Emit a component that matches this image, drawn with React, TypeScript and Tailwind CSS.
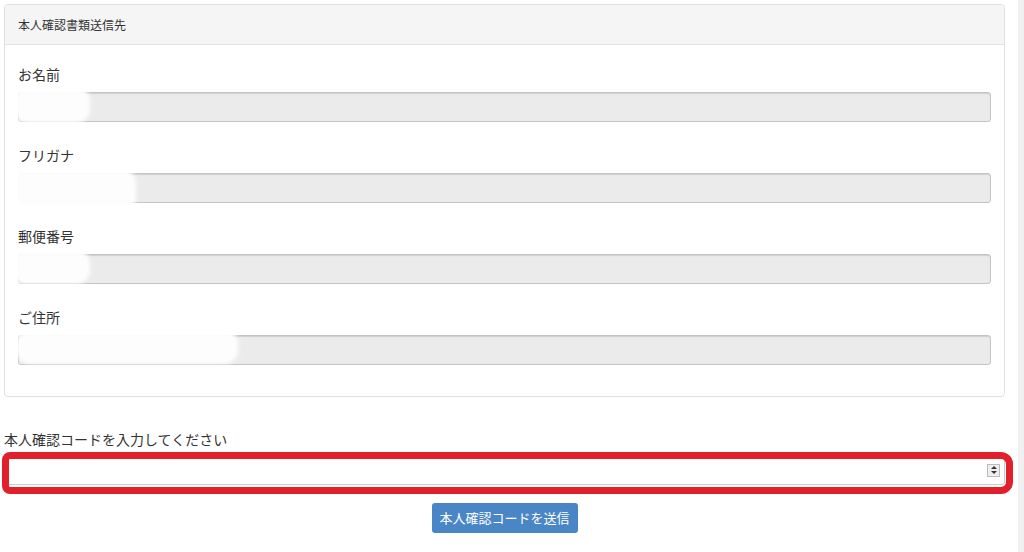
import React from "react";

type Field = { label: string; blur: string };

const fields: Field[] = [
  { label: "お名前", blur: "left-[-4px] top-[-5px] w-[76px] h-[36px]" },
  { label: "フリガナ", blur: "left-[-8px] top-[-4px] w-[126px] h-[42px]" },
  { label: "郵便番号", blur: "left-[-6px] top-[-4px] w-[78px] h-[34px]" },
  { label: "ご住所", blur: "left-[-2px] top-[-5px] w-[222px] h-[34px]" },
];

function FormGroup({ label, blur }: Field) {
  return (
    <div className="mb-[23px] last:mb-0">
      <div className="h-[20px] mb-[8px] text-[14px] leading-[20px] text-[#333]">{label}</div>
      <div className="relative">
        <div className="h-[30px] rounded-[3px] border border-[#c4c4c4] bg-[#ebebeb] shadow-[inset_0_1px_1px_rgba(0,0,0,0.12)]" />
        {/* redacted value */}
        <div className={`absolute ${blur} rounded-[14px] bg-white blur-[2px] opacity-95`} />
      </div>
    </div>
  );
}

export default function App() {
  return (
    <div
      className="flex w-[1024px] h-[552px] bg-white overflow-hidden"
      style={{ fontFamily: '"Noto Sans CJK JP", "Noto Sans", sans-serif' }}
    >
      <div className="w-[1018px] pl-[4px] pt-[4px] relative">
        <div className="w-[1001px] rounded-[4px] border border-[#e0e0e0]">
          <div className="h-[40px] bg-[#f5f5f5] border-b border-[#e3e3e3] rounded-t-[4px] px-[13px] flex items-center text-[12px] text-[#333]">
            本人確認書類送信先
          </div>
          <div className="px-[13px] pt-[19px] pb-[31px]">
            {fields.map((f) => (
              <FormGroup key={f.label} {...f} />
            ))}
          </div>
        </div>

        <div className="mt-[32px] w-[1001px]">
          <div className="h-[20px] mb-[6px] text-[14px] leading-[20px] text-[#333]">本人確認コードを入力してください</div>
          <div className="h-[30px] border border-[#ccc] rounded-[3px] bg-white flex items-center justify-end pr-[4px]">
            <div className="w-[13px] h-[13px] border border-[#bbb] bg-[#eee] flex flex-col items-center justify-center gap-[2px]">
              <div className="w-0 h-0 border-l-[3px] border-r-[3px] border-b-[3px] border-l-transparent border-r-transparent border-b-[#333]" />
              <div className="w-0 h-0 border-l-[3px] border-r-[3px] border-t-[3px] border-l-transparent border-r-transparent border-t-[#333]" />
            </div>
          </div>
          <div className="flex justify-center mt-[18px]">
            <button className="w-[146px] h-[30px] rounded-[3px] bg-[#4a86c5] text-white text-[13px] flex items-center justify-center">
              本人確認コードを送信
            </button>
          </div>
        </div>

        {/* red highlight */}
        <div className="absolute left-[2px] top-[452px] w-[1011px] h-[42px] border-[7px] border-[#e2202c] rounded-l-[8px] rounded-r-[12px]" />
      </div>
      <div className="w-[6px] bg-[#f1f1f1]" />
    </div>
  );
}
